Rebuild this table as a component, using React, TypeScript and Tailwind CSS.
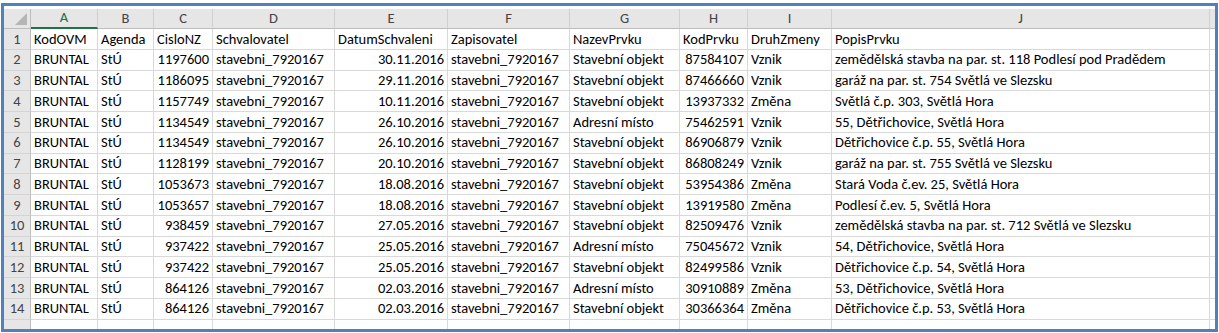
import React from 'react';

// Column widths in px: row header, A..J, then the sliver of the next column
const cols = ['A', 'B', 'C', 'D', 'E', 'F', 'G', 'H', 'I', 'J'];

// right-aligned columns (numbers and dates)
const numCols = [2, 4, 7];

const header = ['KodOVM', 'Agenda', 'CisloNZ', 'Schvalovatel', 'DatumSchvaleni', 'Zapisovatel', 'NazevPrvku', 'KodPrvku', 'DruhZmeny', 'PopisPrvku'];

const data: [string, string, string, string, string][] = [
  ['1197600', '30.11.2016', 'Stavební objekt', '87584107', 'Vznik|zemědělská stavba na par. st. 118 Podlesí pod Pradědem'],
  ['1186095', '29.11.2016', 'Stavební objekt', '87466660', 'Vznik|garáž na par. st. 754 Světlá ve Slezsku'],
  ['1157749', '10.11.2016', 'Stavební objekt', '13937332', 'Změna|Světlá č.p. 303, Světlá Hora'],
  ['1134549', '26.10.2016', 'Adresní místo', '75462591', 'Vznik|55, Dětřichovice, Světlá Hora'],
  ['1134549', '26.10.2016', 'Stavební objekt', '86906879', 'Vznik|Dětřichovice č.p. 55, Světlá Hora'],
  ['1128199', '20.10.2016', 'Stavební objekt', '86808249', 'Vznik|garáž na par. st. 755 Světlá ve Slezsku'],
  ['1053673', '18.08.2016', 'Stavební objekt', '53954386', 'Změna|Stará Voda č.ev. 25, Světlá Hora'],
  ['1053657', '18.08.2016', 'Stavební objekt', '13919580', 'Změna|Podlesí č.ev. 5, Světlá Hora'],
  ['938459', '27.05.2016', 'Stavební objekt', '82509476', 'Vznik|zemědělská stavba na par. st. 712 Světlá ve Slezsku'],
  ['937422', '25.05.2016', 'Adresní místo', '75045672', 'Vznik|54, Dětřichovice, Světlá Hora'],
  ['937422', '25.05.2016', 'Stavební objekt', '82499586', 'Vznik|Dětřichovice č.p. 54, Světlá Hora'],
  ['864126', '02.03.2016', 'Adresní místo', '30910889', 'Změna|53, Dětřichovice, Světlá Hora'],
  ['864126', '02.03.2016', 'Stavební objekt', '30366364', 'Změna|Dětřichovice č.p. 53, Světlá Hora'],
];

const rows: string[][] = [
  header,
  ...data.map(([cislo, datum, nazev, kod, rest]) => {
    const [druh, popis] = rest.split('|');
    return ['BRUNTAL', 'StÚ', cislo, 'stavebni_7920167', datum, 'stavebni_7920167', nazev, kod, druh, popis];
  }),
];

const gridCols = 'grid-cols-[27px_67px_56px_59px_122px_113px_122px_110px_68px_84px_378px_1fr]';

export default function App() {
  return (
    <div className="w-[1219px] h-[333px] bg-white pt-[3px] pl-[1px] font-['Carlito','Lato',sans-serif] text-[14.5px] text-black">
      <div className="w-[1217px] h-[329px] border-[3px] border-[#4f81bd] bg-white pt-[3px] overflow-hidden">
        <div className={`grid ${gridCols} grid-rows-[20px_repeat(14,20.75px)_1fr] h-full`}>
          {/* corner */}
          <div className="relative bg-[#e6e6e6] border-r border-b border-[#bdbdbd]">
            <svg className="absolute right-[3px] bottom-[3px]" width="12" height="12" viewBox="0 0 12 12">
              <polygon points="12,0 12,12 0,12" fill="#b5b5b5" />
            </svg>
          </div>
          {cols.map((c, i) => (
            <div
              key={c}
              className={`flex items-center justify-center bg-[#e6e6e6] border-r border-[#d0d0d0] ${
                i === 0 ? 'border-b-2 border-b-[#217346] text-[#217346] bg-[#dcdcdc]' : 'border-b border-b-[#bdbdbd] text-[#444]'
              }`}
            >
              {c}
            </div>
          ))}
          <div className="bg-[#e6e6e6] border-b border-[#bdbdbd]" />

          {rows.map((r, ri) => (
            <React.Fragment key={ri}>
              <div className="flex items-center justify-center pt-[1px] bg-[#e6e6e6] border-r border-[#bdbdbd] border-b border-b-[#d4d4d4] text-[#444]">
                {ri + 1}
              </div>
              {r.map((v, ci) => (
                <div
                  key={ci}
                  className={`flex items-center pt-[1px] px-[3px] whitespace-nowrap overflow-hidden border-r border-b border-[#d9d9d9] ${
                    ri > 0 && numCols.includes(ci) ? 'justify-end' : 'justify-start'
                  }`}
                >
                  {v}
                </div>
              ))}
              <div className="border-b border-[#d9d9d9]" />
            </React.Fragment>
          ))}

          {/* partial row 15 */}
          <div className="bg-[#e6e6e6] border-r border-[#bdbdbd]" />
          {cols.map((c) => (
            <div key={c} className="border-r border-[#d9d9d9]" />
          ))}
          <div />
        </div>
      </div>
    </div>
  );
}
